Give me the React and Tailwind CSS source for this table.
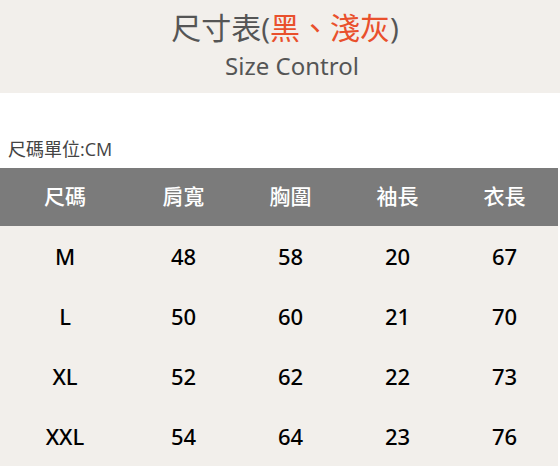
import React from 'react';

const rows = [
  ['M', '48', '58', '20', '67'],
  ['L', '50', '60', '21', '70'],
  ['XL', '52', '62', '22', '73'],
  ['XXL', '54', '64', '23', '76'],
];

const headers = ['尺碼', '肩寬', '胸圍', '袖長', '衣長'];

const font = { fontFamily: '"Open Sans", "Noto Sans CJK TC", sans-serif' };
const bodyFont = { fontFamily: '"Noto Sans", "Noto Sans CJK TC", sans-serif' };

export default function App() {
  return (
    <div className="w-[560px] h-[466px] bg-white overflow-hidden" style={font}>
      <div className="h-[93px] bg-[#f2efeb] flex flex-col items-center">
        <div className="mt-[8px] text-[30px] leading-[40px] text-[#555] pl-[10px]">
          尺寸表(<span className="text-[#e9502c]">黑、淺灰</span>)
        </div>
        <div className="mt-[3px] text-[24px] leading-[30px] text-[#555] pl-[24px]" style={bodyFont}>
          Size Control
        </div>
      </div>
      <div className="h-[75px] flex items-end pb-[5px] pl-[8px] text-[18px] text-[#444]">尺碼單位:CM</div>
      <div className="w-[558px]">
        <div className="grid grid-cols-[130px_repeat(4,1fr)] h-[58px] bg-[#7b7b7b] text-white text-[21px] font-medium items-center text-center">
          {headers.map((h) => (
            <div key={h}>{h}</div>
          ))}
        </div>
        <div className="bg-[#f2efeb]" style={bodyFont}>
          {rows.map((r) => (
            <div key={r[0]} className="grid grid-cols-[130px_repeat(4,1fr)] h-[60px] items-center text-center text-[22px] text-black font-medium">
              {r.map((c, i) => (
                <div key={i}>{c}</div>
              ))}
            </div>
          ))}
        </div>
      </div>
    </div>
  );
}
